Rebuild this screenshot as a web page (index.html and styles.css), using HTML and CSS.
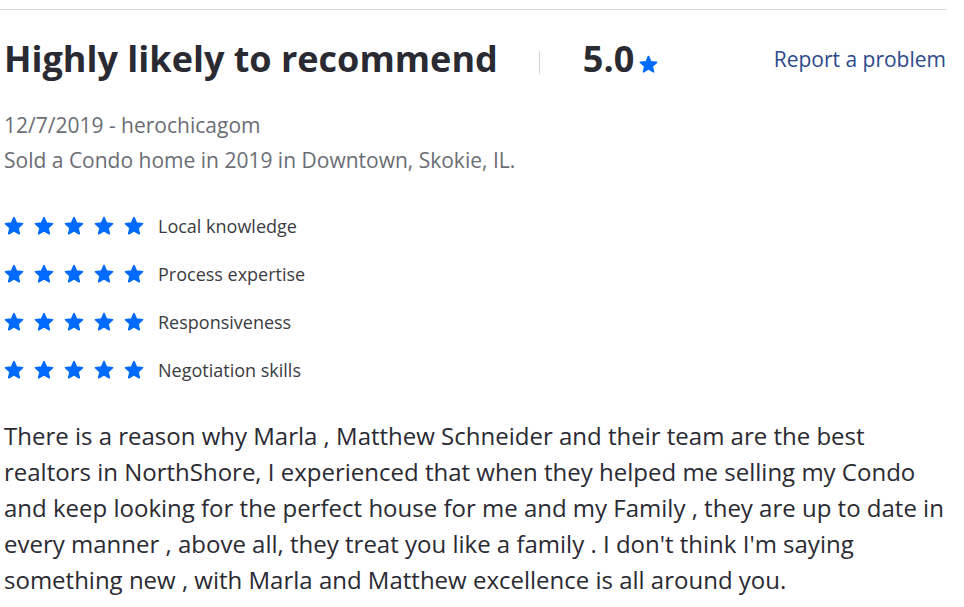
FILE: index.html
```html
<!DOCTYPE html>
<html lang="en">
<head>
<meta charset="utf-8">
<title>Review</title>
<link rel="stylesheet" href="styles.css">
</head>
<body>
<svg width="0" height="0" class="defs" aria-hidden="true">
  <defs>
    <symbol id="star" viewBox="0 0 20 20">
      <path d="M10 1.5L12.47 7.1L18.56 7.72L13.99 11.8L15.29 17.78L10 14.7L4.71 17.78L6.01 11.8L1.44 7.72L7.53 7.1Z" fill="currentColor" stroke="currentColor" stroke-width="1.6" stroke-linejoin="round"/>
    </symbol>
  </defs>
</svg>
<div class="review">
  <hr class="rule">
  <div class="head">
    <h1 class="title">Highly likely to recommend</h1>
    <span class="sep"></span>
    <span class="score">5.0</span>
    <svg class="score-star"><use href="#star"/></svg>
    <a class="report" href="#">Report a problem</a>
  </div>
  <div class="meta first">12/7/2019 - herochicagom</div>
  <div class="meta">Sold a Condo home in 2019 in Downtown, Skokie, IL.</div>
  <ul class="ratings">
    <li class="rating"><span class="stars"><svg><use href="#star"/></svg><svg><use href="#star"/></svg><svg><use href="#star"/></svg><svg><use href="#star"/></svg><svg><use href="#star"/></svg></span><span class="label">Local knowledge</span></li>
    <li class="rating"><span class="stars"><svg><use href="#star"/></svg><svg><use href="#star"/></svg><svg><use href="#star"/></svg><svg><use href="#star"/></svg><svg><use href="#star"/></svg></span><span class="label">Process expertise</span></li>
    <li class="rating"><span class="stars"><svg><use href="#star"/></svg><svg><use href="#star"/></svg><svg><use href="#star"/></svg><svg><use href="#star"/></svg><svg><use href="#star"/></svg></span><span class="label">Responsiveness</span></li>
    <li class="rating"><span class="stars"><svg><use href="#star"/></svg><svg><use href="#star"/></svg><svg><use href="#star"/></svg><svg><use href="#star"/></svg><svg><use href="#star"/></svg></span><span class="label">Negotiation skills</span></li>
  </ul>
  <p class="body">There is a reason why Marla , Matthew Schneider and their team are the best realtors in NorthShore, I experienced that when they helped me selling my Condo and keep looking for the perfect house for me and my Family , they are up to date in every manner , above all, they treat you like a family . I don't think I'm saying something new , with Marla and Matthew excellence is all around you.</p>
</div>
</body>
</html>
```
FILE: styles.css
```css
html, body {
  margin: 0;
  padding: 0;
  background: #ffffff;
}
body {
  font-family: "Open Sans", "Noto Sans", sans-serif;
  color: #2a2a33;
}
.defs {
  position: absolute;
  width: 0;
  height: 0;
}
.review {
  width: 946px;
  padding-top: 9px;
}
.rule {
  margin: 0;
  border: 0;
  border-top: 1px solid #d6d6da;
}
.head {
  display: flex;
  align-items: center;
  padding-left: 4px;
  margin-top: 26px;
  height: 46px;
}
.title {
  margin: 0;
  font-size: 36px;
  font-weight: 700;
  line-height: 46px;
}
.sep {
  width: 1px;
  height: 23px;
  background: #d6d6da;
  margin-left: 41px;
  margin-top: 6px;
}
.score {
  margin-left: 43px;
  font-size: 36px;
  font-weight: 700;
  line-height: 46px;
}
.score-star {
  width: 19px;
  height: 19px;
  color: #006aff;
  margin-left: 5px;
  margin-top: 10px;
}
.report {
  margin-left: auto;
  font-size: 21px;
  color: #2c4a8c;
  text-decoration: none;
}
.meta {
  padding-left: 4px;
  font-size: 21px;
  color: #6b6d75;
  line-height: 35px;
}
.meta.first {
  margin-top: 26px;
}
.ratings {
  list-style: none;
  margin: 24px 0 0;
  padding: 0 0 0 4px;
}
.rating {
  display: flex;
  align-items: center;
  height: 48px;
}
.stars {
  display: flex;
  gap: 10px;
}
.stars svg {
  width: 20px;
  height: 20px;
  color: #006aff;
}
.label {
  margin-left: 14px;
  font-size: 18px;
  color: #3b3b42;
}
.body {
  margin: 24px 0 0;
  padding-left: 4px;
  font-size: 24px;
  line-height: 36px;
  color: #2a2a33;
}
```
